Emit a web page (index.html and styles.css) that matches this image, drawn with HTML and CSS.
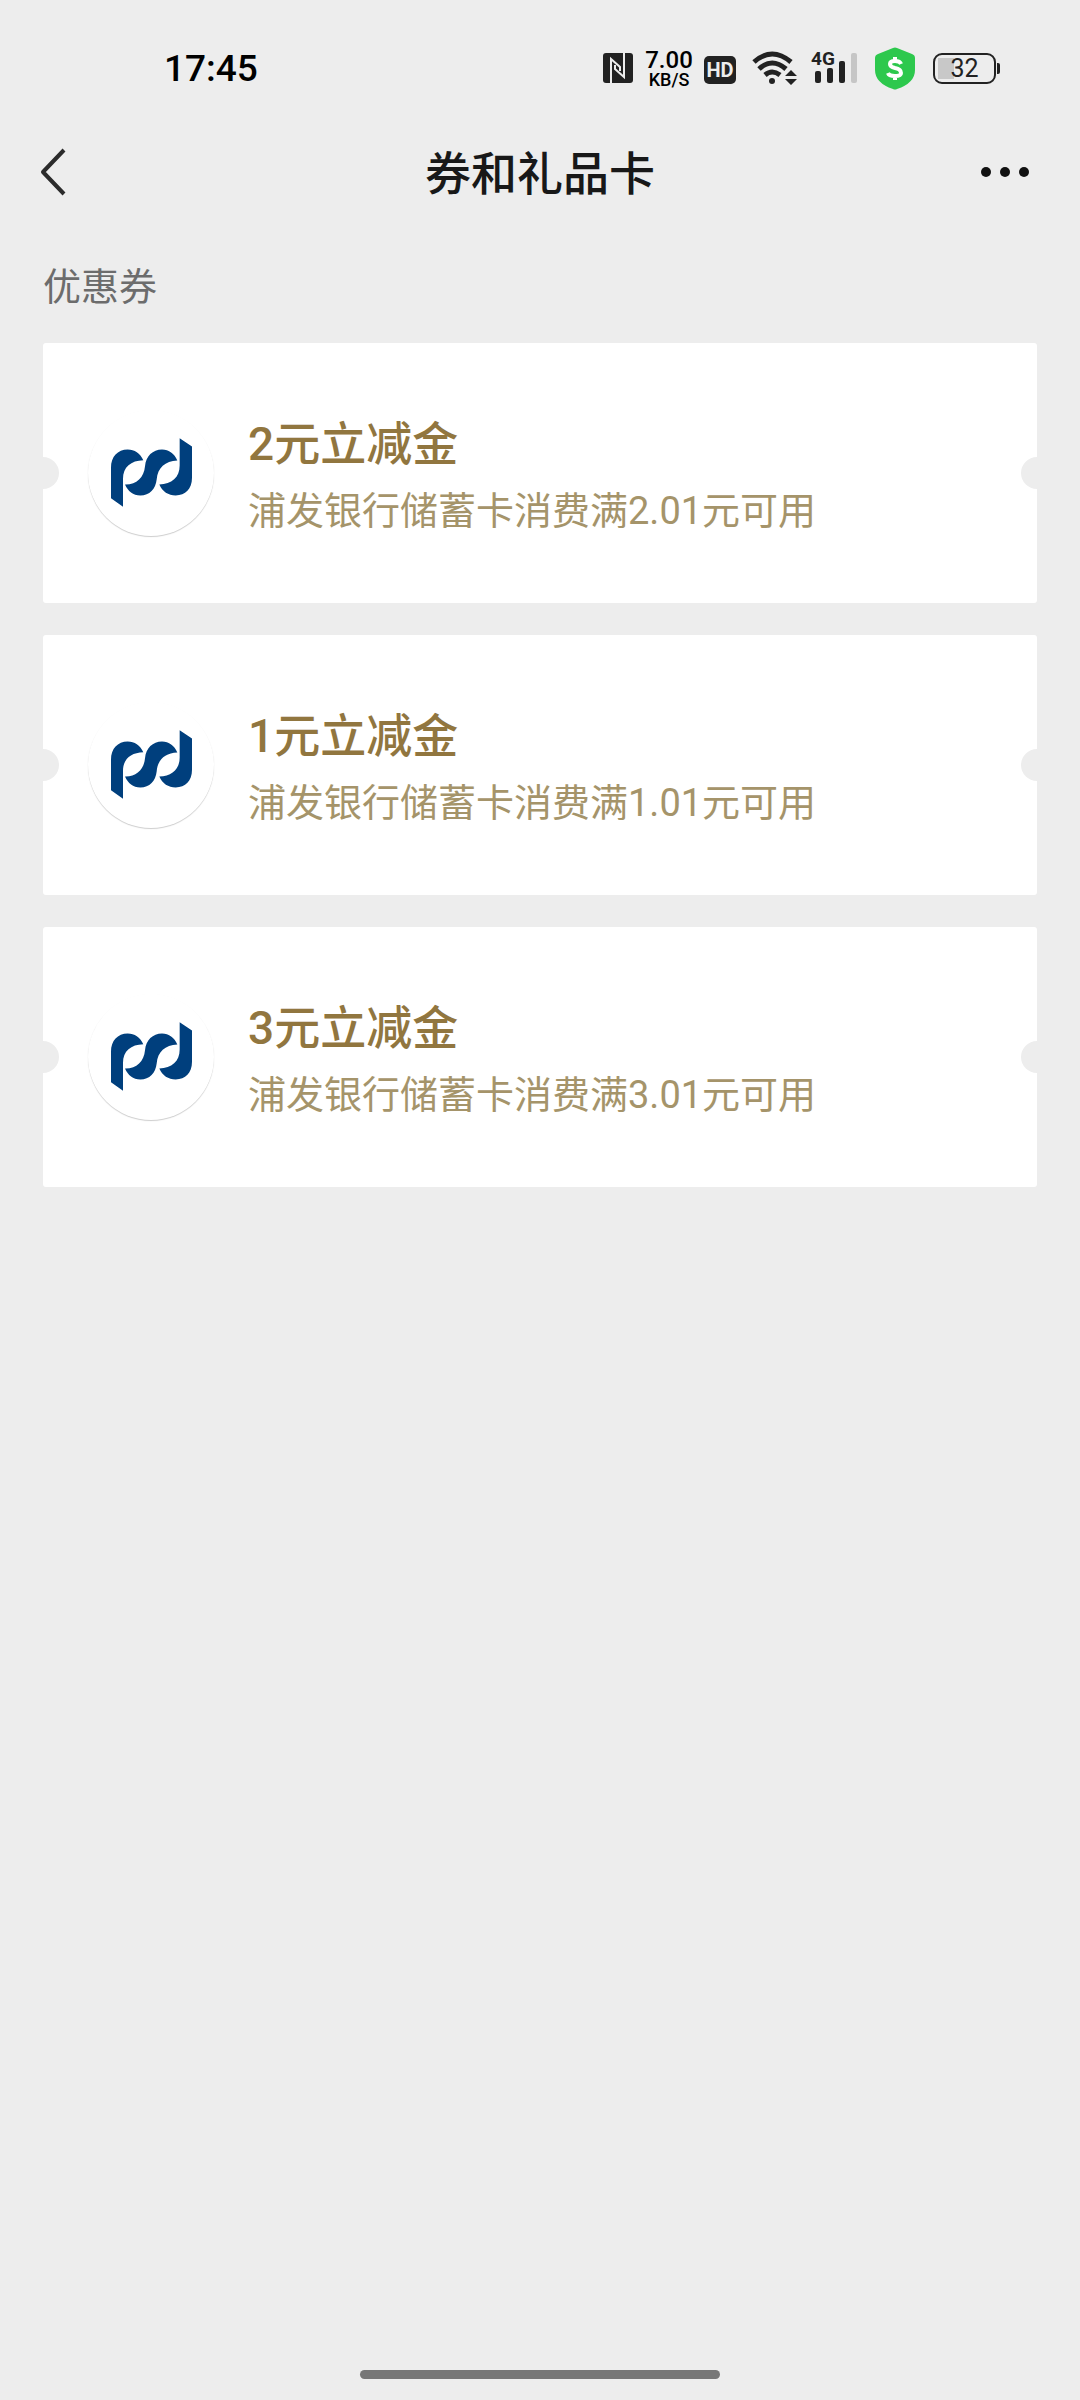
FILE: index.html
```html
<!DOCTYPE html>
<html lang="zh-CN">
<head>
<meta charset="utf-8">
<meta name="viewport" content="width=device-width, initial-scale=1">
<title>券和礼品卡</title>
<link rel="stylesheet" href="styles.css">
</head>
<body>
<svg class="symbols" aria-hidden="true">
  <symbol id="bank-logo" viewBox="242 322 243 206">
    <path d="M242 502V410C242 378 262 356 292 356C313 356 329 367 339 388C302 389 278 408 278 444V528Z"/>
    <path d="M284 461C318 462 341 440 344 406C347 376 367 356 395 356C416 356 432 368 441 389C404 391 382 410 379 446C376 474 358 494 330 494C308 494 293 481 284 461Z"/>
    <path d="M387 461C424 460 448 440 448 404V322L485 347V441C485 474 465 494 436 494C414 494 396 482 387 461Z"/>
  </symbol>
</svg>

<div class="status-bar">
  <time class="clock">17:45</time>
  <div class="status-icons">
    <svg class="nfc" width="30" height="30" viewBox="0 0 30 30" role="img" aria-label="NFC">
      <rect width="30" height="30" rx="3" fill="#222"/>
      <path d="M8 30V6L17 14V18M21 0V24L12 16V12" fill="none" stroke="#ededed" stroke-width="2"/>
    </svg>
    <div class="speed"><span class="speed-value">7.00</span><span class="speed-unit">KB/S</span></div>
    <span class="hd">HD</span>
    <svg class="wifi" width="45" height="34" viewBox="0 0 45 34" role="img" aria-label="Wi-Fi">
      <g fill="none" stroke="#222" stroke-width="5">
        <path d="M2 11Q20 -5 39 11"/>
        <path d="M7 18Q20 6 34 18"/>
        <path d="M13 24Q20 18 28 24"/>
      </g>
      <circle cx="20" cy="30" r="3" fill="#222"/>
      <path d="M33 25L39 19L45 25ZM33 28H45L39 34Z" fill="#222"/>
    </svg>
    <div class="signal">
      <span class="network">4G</span>
      <svg width="43" height="32" viewBox="0 0 43 32" role="img" aria-label="信号">
        <rect x="0" y="18" width="6" height="12" rx="2" fill="#222"/>
        <rect x="12" y="15" width="6" height="15" rx="2" fill="#222"/>
        <rect x="24" y="8" width="6" height="22" rx="2" fill="#222"/>
        <rect x="36" y="0" width="6" height="30" rx="2" fill="#c6c6c6"/>
      </svg>
    </div>
    <svg class="shield" width="40" height="43" viewBox="0 0 40 43" role="img" aria-label="支付保护">
      <path d="M18 1Q20 0 22 1L37 7Q40 8 40 11V23Q40 36 22 42Q20 43 18 42Q0 36 0 23V11Q0 8 3 7Z" fill="#2dc84d"/>
      <path d="M26 17Q25 14 20 14Q15 14 15 17Q15 20 20 21Q26 22 26 26Q26 29 20 29Q14 29 13 26M20 10V15M20 28V33" fill="none" stroke="#fff" stroke-width="4"/>
    </svg>
    <div class="battery"><span>32</span></div>
  </div>
</div>

<header class="nav">
  <button class="nav-button" type="button" aria-label="返回">
    <svg width="26" height="48" viewBox="0 0 26 48"><path d="M24 2L3 24L24 46" fill="none" stroke="#2b2b2b" stroke-width="4" stroke-linejoin="round"/></svg>
  </button>
  <h1>券和礼品卡</h1>
  <button class="nav-button more" type="button" aria-label="更多">
    <svg width="50" height="12" viewBox="0 0 50 12" fill="#111"><circle cx="6" cy="6" r="5"/><circle cx="25" cy="6" r="5"/><circle cx="44" cy="6" r="5"/></svg>
  </button>
</header>

<main>
  <h2>优惠券</h2>
  <ul class="coupons">
    <li class="coupon">
      <span class="badge"><svg width="81" height="69"><use href="#bank-logo"/></svg></span>
      <div class="details"><h3>2元立减金</h3><p>浦发银行储蓄卡消费满2.01元可用</p></div>
    </li>
    <li class="coupon">
      <span class="badge"><svg width="81" height="69"><use href="#bank-logo"/></svg></span>
      <div class="details"><h3>1元立减金</h3><p>浦发银行储蓄卡消费满1.01元可用</p></div>
    </li>
    <li class="coupon">
      <span class="badge"><svg width="81" height="69"><use href="#bank-logo"/></svg></span>
      <div class="details"><h3>3元立减金</h3><p>浦发银行储蓄卡消费满3.01元可用</p></div>
    </li>
  </ul>
</main>

<div class="home-indicator"></div>
</body>
</html>
```
FILE: styles.css
```css
* {
  box-sizing: border-box;
  margin: 0;
  padding: 0;
}

body {
  display: flex;
  flex-direction: column;
  min-height: 100vh;
  background: #ededed;
  color: #181818;
  font-family: Roboto, "Noto Sans CJK SC", sans-serif;
}

svg {
  display: block;
  flex: none;
}

.symbols {
  position: absolute;
  width: 0;
  height: 0;
}

.status-bar {
  display: flex;
  align-items: center;
  justify-content: space-between;
  height: 136px;
  padding: 0 80px 0 164px;
}

.clock {
  color: #000;
  font-size: 37px;
  font-weight: 500;
}

.status-icons {
  display: flex;
  align-items: center;
}

.speed {
  display: flex;
  flex-direction: column;
  align-items: center;
  width: 50px;
  margin: 2px 10px 0 11px;
  color: #000;
  font-weight: 500;
}

.speed-value {
  font-size: 24px;
  line-height: 22px;
}

.speed-unit {
  font-size: 18px;
  line-height: 18px;
}

.hd {
  width: 32px;
  height: 28px;
  margin-top: 4px;
  border-radius: 5px;
  background: #222;
  color: #ededed;
  font-size: 20px;
  font-weight: 700;
  line-height: 28px;
  text-align: center;
}

.wifi {
  margin-left: 16px;
}

.signal {
  position: relative;
  margin: 2px 17px 0 18px;
}

.network {
  position: absolute;
  top: -4px;
  left: -4px;
  color: #222;
  font-size: 19px;
  font-weight: 700;
  line-height: 20px;
}

.battery {
  position: relative;
  width: 63px;
  height: 31px;
  margin: 0 4px 0 18px;
  padding: 3px;
  border: 2px solid #222;
  border-radius: 9px;
  background: linear-gradient(#c8c8c8, #c8c8c8) 3px 3px / 16px 21px no-repeat;
  color: #222;
  font-size: 25px;
  line-height: 21px;
  text-align: center;
}

.battery::after {
  content: "";
  position: absolute;
  top: 8px;
  right: -6px;
  width: 3px;
  height: 11px;
  border-radius: 0 2px 2px 0;
  background: #222;
}

.nav {
  display: grid;
  grid-template-columns: 1fr auto 1fr;
  align-items: center;
  padding: 0 40px;
}

.nav-button {
  display: flex;
  align-items: center;
  width: 50px;
  height: 72px;
  border: 0;
  background: none;
}

.more {
  justify-self: end;
  margin-right: 10px;
}

h1 {
  padding-top: 4px;
  font-size: 46px;
  font-weight: 500;
  line-height: 68px;
}

main {
  padding: 51px 43px;
}

h2 {
  margin-bottom: 28px;
  color: #6c6c6c;
  font-size: 38px;
  font-weight: 400;
  line-height: 56px;
}

.coupons {
  display: grid;
  gap: 32px;
  list-style: none;
}

.coupon {
  position: relative;
  display: flex;
  align-items: center;
  gap: 34px;
  min-height: 260px;
  padding: 0 45px;
  border-radius: 3px;
  background: #fff;
  overflow: hidden;
}

.coupon::before,
.coupon::after {
  content: "";
  position: absolute;
  top: 114px;
  width: 32px;
  height: 32px;
  border-radius: 50%;
  background: #ededed;
}

.coupon::before {
  left: -16px;
}

.coupon::after {
  right: -16px;
}

.badge {
  display: flex;
  flex: none;
  align-items: center;
  justify-content: center;
  width: 126px;
  height: 126px;
  padding-bottom: 2px;
  border-radius: 50%;
  box-shadow: 0 1px 1px #00000033;
  fill: #003f7d;
}

.details {
  padding-top: 6px;
}

h3 {
  color: #91763f;
  font-size: 46px;
  font-weight: 500;
  line-height: 70px;
}

.details p {
  color: #a5946a;
  font-size: 38px;
  line-height: 64px;
}

.home-indicator {
  width: 360px;
  height: 9px;
  margin: auto auto 21px;
  border-radius: 5px;
  background: #777;
}
```
